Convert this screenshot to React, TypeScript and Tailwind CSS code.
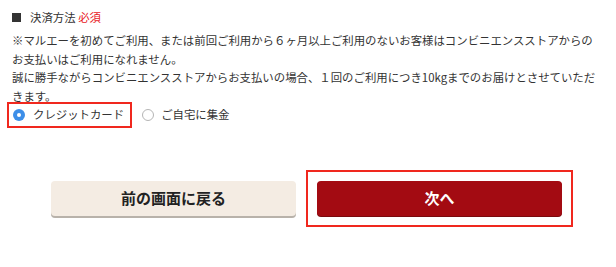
import React from "react";

export default function App() {
  const font = { fontFamily: '"Noto Sans CJK JP", "Noto Sans", sans-serif' };
  return (
    <div className="w-[616px] h-[267px] bg-white text-[#333]" style={font}>
      <div className="pl-[12px] pr-[12px] pt-[8px]">
        <div className="flex items-center gap-[9px] text-[11.4px] leading-[18px]">
          <span className="w-[9px] h-[9px] bg-[#333] inline-block" />
          <span>
            決済方法 <span className="text-[#e8181e]">必須</span>
          </span>
        </div>
        <div className="mt-[5px] text-[11.4px] leading-[18.7px] w-[592px]">
          <p>※マルエーを初めてご利用、または前回ご利用から６ヶ月以上ご利用のないお客様はコンビニエンスストアからのお支払いはご利用になれません。</p>
          <p>誠に勝手ながらコンビニエンスストアからお支払いの場合、１回のご利用につき10kgまでのお届けとさせていただきます。</p>
        </div>
        <div className="flex items-center -mt-[4px] -ml-[5px] text-[11.4px]">
          <label className="flex items-center gap-[8px] border-2 border-[#f0281e] h-[26px] pl-[4px] pr-[6px]">
            <span className="w-[12px] h-[12px] rounded-full bg-[#3c8ee8] flex items-center justify-center">
              <span className="w-[4px] h-[4px] rounded-full bg-white" />
            </span>
            <span>クレジットカード</span>
          </label>
          <label className="flex items-center gap-[7px] ml-[10px]">
            <span className="w-[12px] h-[12px] rounded-full border border-[#b5b5b5] bg-white" />
            <span>ご自宅に集金</span>
          </label>
        </div>
      </div>
      <div className="flex items-center mt-[51px] pl-[51px]">
        <button className="w-[245px] h-[35px] rounded-[4px] bg-[#f4ece3] shadow-[0_2px_0_#b8b2aa] text-[15px] font-bold text-[#222]">
          前の画面に戻る
        </button>
        <div className="ml-[10px] border-2 border-[#f0281e] p-[9px] -my-[9px]">
          <button className="w-[245px] h-[35px] rounded-[4px] bg-[#a30b12] shadow-[0_1px_0_#7a0a0e] text-[15px] font-bold text-white block">
            次へ
          </button>
        </div>
      </div>
    </div>
  );
}
